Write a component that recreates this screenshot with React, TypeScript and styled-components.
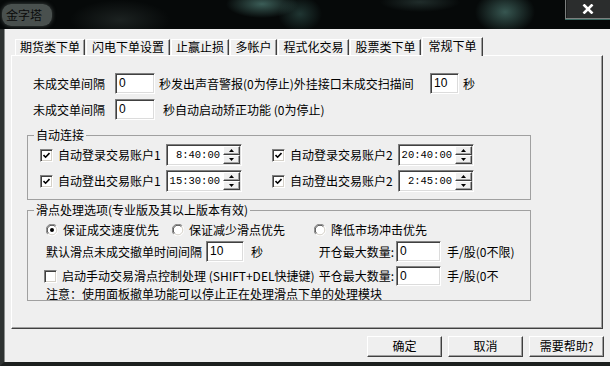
import React, { ReactElement, ReactNode } from 'react';
import styled, { createGlobalStyle } from 'styled-components';

const GlobalStyle = createGlobalStyle`
  html, body {
    margin: 0;
    padding: 0;
    background: #000;
  }
  body {
    font-family: "Noto Sans CJK SC", "Liberation Sans", sans-serif;
    font-size: 12px;
    color: #000;
  }
`;

const Window = styled.div`
  width: 610px;
  height: 366px;
  display: flex;
  flex-direction: column;
  overflow: hidden;
`;

const TitleBar = styled.div`
  flex: none;
  height: 29px;
  display: flex;
  align-items: flex-start;
  justify-content: space-between;
  background:
    radial-gradient(ellipse 36px 14px at 262px 4px, rgba(95, 150, 140, 0.6), transparent),
    radial-gradient(ellipse 22px 18px at 300px 14px, rgba(70, 120, 112, 0.4), transparent),
    radial-gradient(ellipse 30px 22px at 505px 12px, rgba(95, 150, 140, 0.55), transparent),
    radial-gradient(ellipse 40px 10px at 420px 2px, rgba(80, 110, 105, 0.35), transparent),
    radial-gradient(ellipse 50px 20px at 120px 20px, rgba(60, 70, 68, 0.4), transparent),
    #060909;
`;

const TitlePill = styled.div`
  margin: 4px 0 0 2px;
  height: 22px;
  padding: 0 10px 0 4px;
  border-radius: 9px;
  background: rgba(96, 104, 101, 0.75);
  box-shadow: 0 0 4px rgba(96, 104, 101, 0.7);
  color: #0b0b0b;
  line-height: 22px;
  font-size: 12px;
`;

const CloseButton = styled.div`
  width: 45px;
  height: 19px;
  box-sizing: border-box;
  border-left: 1px solid #7c7f7e;
  border-bottom: 1px solid #7c7f7e;
  box-shadow: inset 1px 0 0 #1a1c1c, 0 1px 0 #3b6a62;
  background: #2b2d2d;
  display: flex;
  align-items: center;
  justify-content: center;
`;

const Body = styled.div`
  flex: 1;
  display: flex;
  flex-direction: column;
  background: #efefef;
  border-left: 4px solid #2e3231;
  border-bottom: 4px solid #1c1f1e;
  box-shadow: inset 1px 0 0 #8a8d8c;
  padding: 8px 7px 5px 7px;
`;

const TabStrip = styled.div`
  height: 18px;
  display: flex;
  align-items: flex-end;
  gap: 1px;
  padding-left: 4px;
`;

const Tab = styled.div<{ $w: number; $active?: boolean }>`
  position: relative;
  z-index: ${(p) => (p.$active ? 1 : 0)};
  box-sizing: border-box;
  width: ${(p) => p.$w}px;
  height: ${(p) => (p.$active ? 19 : 16)}px;
  margin-bottom: ${(p) => (p.$active ? -1 : 0)}px;
  border-top: 1px solid #ffffff;
  border-left: 1px solid #ffffff;
  border-right: 1px solid #404040;
  box-shadow: inset -1px 0 0 #a0a0a0;
  background: #efefef;
  text-align: center;
  line-height: ${(p) => (p.$active ? 16 : 14)}px;
  white-space: nowrap;
`;

const Panel = styled.div`
  box-sizing: border-box;
  height: 274px;
  border: 1px solid;
  border-color: #ffffff #404040 #404040 #ffffff;
  box-shadow: inset -1px -1px 0 #a0a0a0;
  padding: 17px 0 0 0;
`;

const Row = styled.div<{ $h?: number; $mt?: number; $pl?: number }>`
  display: flex;
  align-items: center;
  height: ${(p) => p.$h ?? 21}px;
  margin-top: ${(p) => p.$mt ?? 0}px;
  padding-left: ${(p) => p.$pl ?? 0}px;
`;

const Label = styled.span<{ $w?: number; $pl?: number; $right?: boolean }>`
  flex: none;
  box-sizing: border-box;
  width: ${(p) => (p.$w ? `${p.$w}px` : 'auto')};
  padding-left: ${(p) => p.$pl ?? 0}px;
  padding-right: ${(p) => (p.$right ? 2 : 0)}px;
  text-align: ${(p) => (p.$right ? 'right' : 'left')};
  white-space: nowrap;
  line-height: 16px;
`;

const Field = styled.div<{ $w: number; $h?: number }>`
  flex: none;
  box-sizing: border-box;
  width: ${(p) => p.$w}px;
  height: ${(p) => p.$h ?? 21}px;
  border: 1px solid;
  border-color: #808080 #ffffff #ffffff #808080;
  box-shadow: inset 1px 1px 0 #404040, inset -1px -1px 0 #dcdcdc;
  background: #ffffff;
  padding: 2px 0 0 3px;
  line-height: 14px;
  font-family: "Liberation Sans", "Noto Sans CJK SC", sans-serif;
  font-size: 12px;
`;

const GroupBox = styled.fieldset<{ $mt: number }>`
  box-sizing: border-box;
  width: 504px;
  min-width: 0;
  margin: ${(p) => p.$mt}px 0 0 15px;
  padding: 0;
  border: 1px solid #a0a0a0;
`;

const GroupTitle = styled.legend`
  margin-left: 6px;
  padding: 0 2px;
  line-height: 14px;
  font-size: 12px;
`;

const GroupRows = styled.div<{ $pt: number; $pb: number }>`
  padding: ${(p) => p.$pt}px 0 ${(p) => p.$pb}px 0;
`;

const ConnectGrid = styled.div`
  display: grid;
  grid-template-columns: 126px 106px 126px 76px;
  grid-auto-rows: 22px;
  row-gap: 4px;
  align-items: center;
  padding-left: 12px;
`;

const OptionItem = styled.div<{ $w?: number }>`
  flex: none;
  display: flex;
  align-items: center;
  gap: 5px;
  width: ${(p) => (p.$w ? `${p.$w}px` : 'auto')};
  white-space: nowrap;
  line-height: 16px;
`;

const Box = styled.span`
  flex: none;
  box-sizing: border-box;
  width: 13px;
  height: 13px;
  border: 1px solid;
  border-color: #808080 #ffffff #ffffff #808080;
  box-shadow: inset 1px 1px 0 #404040, inset -1px -1px 0 #d4d0c8;
  background: #ffffff;
  display: flex;
  align-items: center;
  justify-content: center;
`;

const SpinField = styled.div`
  box-sizing: border-box;
  width: 76px;
  height: 22px;
  display: flex;
  border: 1px solid;
  border-color: #808080 #ffffff #ffffff #808080;
  box-shadow: inset 1px 1px 0 #404040, inset -1px -1px 0 #dcdcdc;
  background: #ffffff;
  padding: 1px;
`;

const SpinText = styled.div`
  flex: 1;
  text-align: right;
  padding: 2px 3px 0 0;
  font-family: "Liberation Mono", "DejaVu Sans Mono", monospace;
  font-size: 10.5px;
  line-height: 14px;
`;

const SpinButtons = styled.div`
  flex: none;
  width: 17px;
  display: flex;
  flex-direction: column;
`;

const SpinButton = styled.div`
  flex: 1;
  box-sizing: border-box;
  border: 1px solid;
  border-color: #ffffff #404040 #404040 #ffffff;
  box-shadow: inset -1px -1px 0 #a0a0a0;
  background: #efefef;
  display: flex;
  align-items: center;
  justify-content: center;
`;

const Footer = styled.div`
  display: flex;
  justify-content: flex-end;
  gap: 6px;
  margin-top: 7px;
  margin-right: -1px;
`;

const PushButton = styled.div`
  box-sizing: border-box;
  width: 75px;
  height: 21px;
  border: 1px solid;
  border-color: #ffffff #404040 #404040 #ffffff;
  box-shadow: inset -1px -1px 0 #a0a0a0;
  background: #efefef;
  text-align: center;
  line-height: 18px;
`;

function CheckMark(): ReactElement {
  return (
    <svg width="7" height="7" viewBox="0 0 7 7">
      <path d="M0.5 3 L2.6 5.2 L6.5 1" stroke="#000" strokeWidth="1.6" fill="none" />
    </svg>
  );
}

function Check({ checked, children, w }: { checked?: boolean; children: ReactNode; w?: number }): ReactElement {
  return (
    <OptionItem $w={w}>
      <Box>{checked && <CheckMark />}</Box>
      <span>{children}</span>
    </OptionItem>
  );
}

function Radio({ on, children, w }: { on?: boolean; children: ReactNode; w?: number }): ReactElement {
  return (
    <OptionItem $w={w}>
      <svg width="12" height="12" viewBox="0 0 12 12" style={{ flex: 'none' }}>
        <circle cx="6" cy="6" r="5.5" fill="#fff" />
        <path d="M1.8 10.2 A5.5 5.5 0 0 1 10.2 1.8" stroke="#808080" fill="none" />
        <path d="M2.6 9.4 A4.5 4.5 0 0 1 9.4 2.6" stroke="#404040" fill="none" />
        <path d="M10.2 1.8 A5.5 5.5 0 0 1 1.8 10.2" stroke="#ffffff" fill="none" />
        <path d="M9.4 2.6 A4.5 4.5 0 0 1 2.6 9.4" stroke="#d4d0c8" fill="none" />
        {on && <circle cx="6" cy="6" r="2" fill="#000" />}
      </svg>
      <span>{children}</span>
    </OptionItem>
  );
}

function Spin({ value }: { value: string }): ReactElement {
  return (
    <SpinField>
      <SpinText>{value}</SpinText>
      <SpinButtons>
        <SpinButton>
          <svg width="5" height="3" viewBox="0 0 5 3">
            <path d="M2.5 0 L5 3 L0 3 Z" fill="#000" />
          </svg>
        </SpinButton>
        <SpinButton>
          <svg width="5" height="3" viewBox="0 0 5 3">
            <path d="M0 0 L5 0 L2.5 3 Z" fill="#000" />
          </svg>
        </SpinButton>
      </SpinButtons>
    </SpinField>
  );
}

const tabs = [
  { label: '期货类下单', w: 70 },
  { label: '闪电下单设置', w: 84 },
  { label: '止赢止损', w: 58 },
  { label: '多帐户', w: 47 },
  { label: '程式化交易', w: 71 },
  { label: '股票类下单', w: 71 },
  { label: '常规下单', w: 61, active: true },
];

export default function App(): ReactElement {
  return (
    <Window>
      <GlobalStyle />
      <TitleBar>
        <TitlePill>金字塔</TitlePill>
        <CloseButton>
          <svg width="12" height="10" viewBox="0 0 12 10">
            <path d="M1.5 0.5 L10.5 9.5 M10.5 0.5 L1.5 9.5" stroke="#fff" strokeWidth="2.6" />
          </svg>
        </CloseButton>
      </TitleBar>
      <Body>
        <TabStrip>
          {tabs.map((t) => (
            <Tab key={t.label} $w={t.w} $active={t.active}>
              {t.label}
            </Tab>
          ))}
        </TabStrip>
        <Panel>
          <Row $pl={21}>
            <Label $w={82}>未成交单间隔</Label>
            <Field $w={40}>0</Field>
            <Label $w={275} $pl={4}>秒发出声音警报(0为停止)外挂接口未成交扫描间</Label>
            <Field $w={29}>10</Field>
            <Label $pl={4}>秒</Label>
          </Row>
          <Row $pl={21} $mt={5}>
            <Label $w={82}>未成交单间隔</Label>
            <Field $w={40}>0</Field>
            <Label $pl={8}>秒自动启动矫正功能 (0为停止)</Label>
          </Row>

          <GroupBox $mt={8}>
            <GroupTitle>自动连接</GroupTitle>
            <GroupRows $pt={2} $pb={7}>
              <ConnectGrid>
                <Check checked>自动登录交易账户1</Check>
                <Spin value="8:40:00" />
                <Check checked>自动登录交易账户2</Check>
                <Spin value="20:40:00" />
                <Check checked>自动登出交易账户1</Check>
                <Spin value="15:30:00" />
                <Check checked>自动登出交易账户2</Check>
                <Spin value="2:45:00" />
              </ConnectGrid>
            </GroupRows>
          </GroupBox>

          <GroupBox $mt={3}>
            <GroupTitle>滑点处理选项(专业版及其以上版本有效)</GroupTitle>
            <GroupRows $pt={4} $pb={0}>
              <Row $h={18} $pl={18}>
                <Radio on w={126}>保证成交速度优先</Radio>
                <Radio w={142}>保证减少滑点优先</Radio>
                <Radio>降低市场冲击优先</Radio>
              </Row>
              <Row $mt={2} $pl={18}>
                <Label $w={160}>默认滑点未成交撤单时间间隔</Label>
                <Field $w={38}>10</Field>
                <Label $w={72} $pl={7}>秒</Label>
                <Label $w={80} $right>开仓最大数量:</Label>
                <Field $w={45}>0</Field>
                <Label $pl={6}>手/股(0不限)</Label>
              </Row>
              <Row $mt={4} $h={20} $pl={16}>
                <Check w={272}>启动手动交易滑点控制处理 (SHIFT+DEL快捷键)</Check>
                <Label $w={80} $right>平仓最大数量:</Label>
                <Field $w={45} $h={20}>0</Field>
                <Label $pl={6}>手/股(0不</Label>
              </Row>
              <Row $mt={1} $h={13} $pl={18}>
                <Label>注意：使用面板撤单功能可以停止正在处理滑点下单的处理模块</Label>
              </Row>
            </GroupRows>
          </GroupBox>
        </Panel>
        <Footer>
          <PushButton>确定</PushButton>
          <PushButton>取消</PushButton>
          <PushButton>需要帮助?</PushButton>
        </Footer>
      </Body>
    </Window>
  );
}
